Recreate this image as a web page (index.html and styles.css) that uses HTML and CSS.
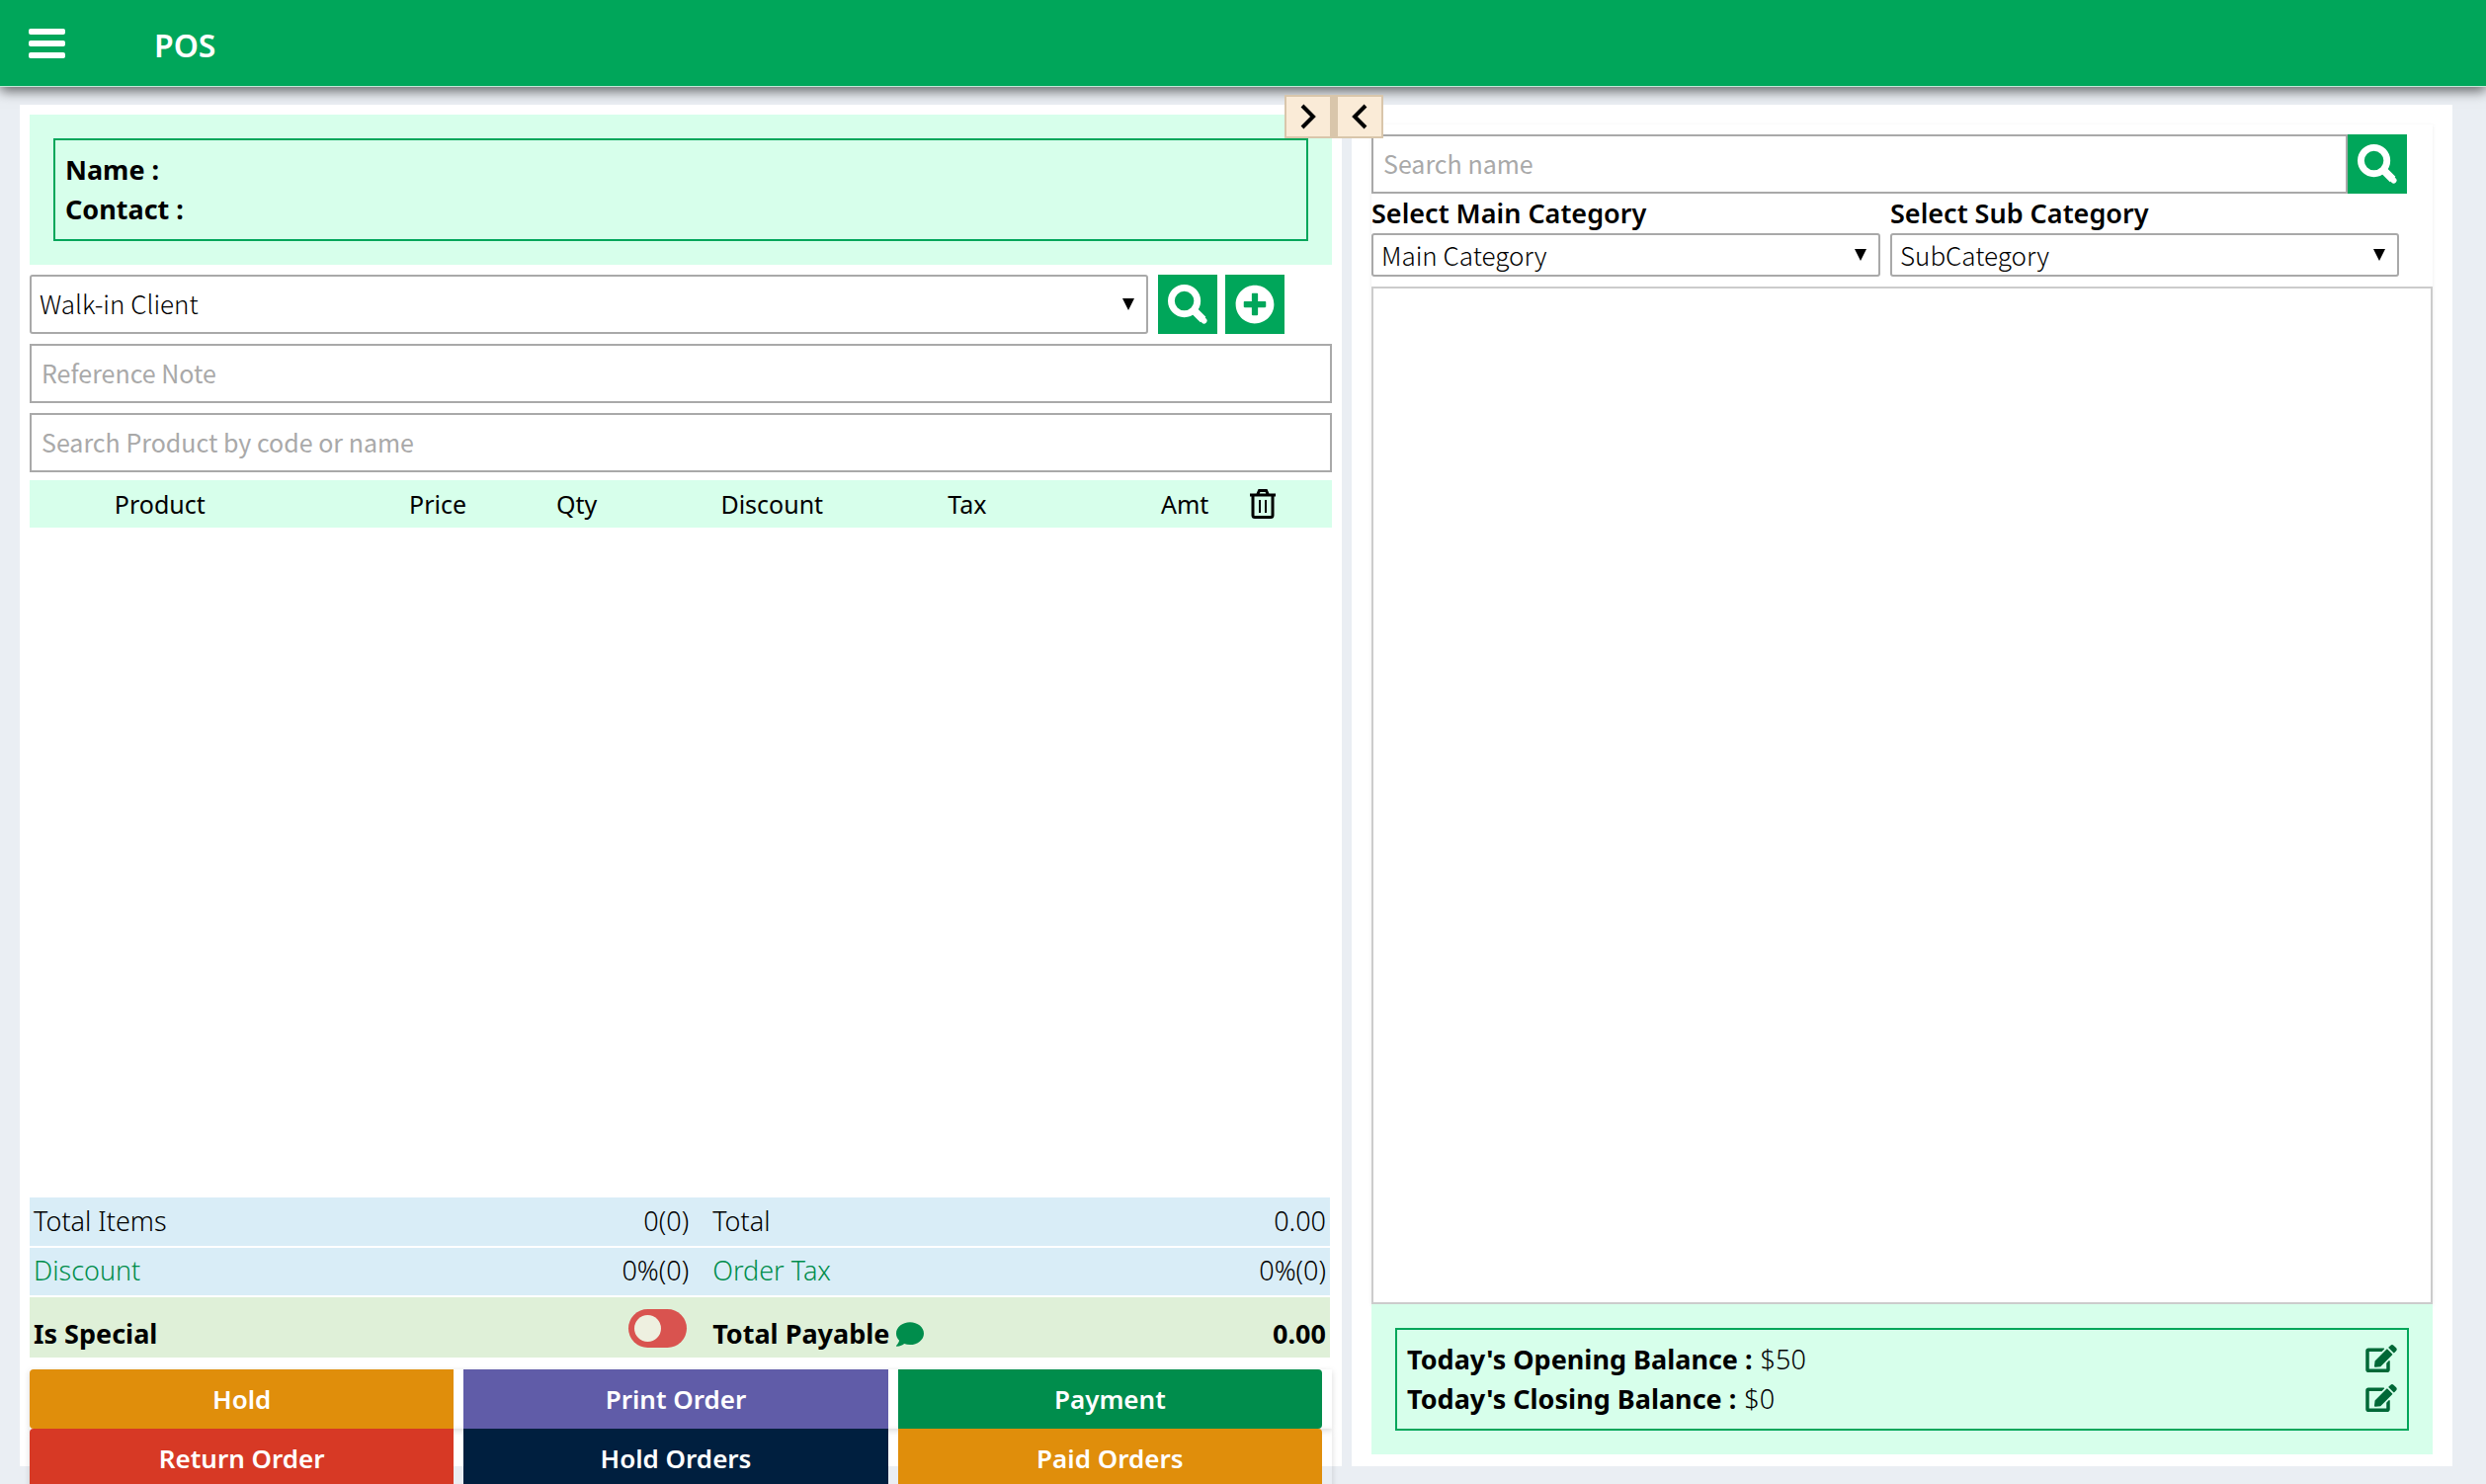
FILE: index.html
```html
<!DOCTYPE html>
<html lang="en">
<head>
<meta charset="utf-8">
<meta name="viewport" content="width=device-width, initial-scale=1">
<title>POS</title>
<link rel="stylesheet" href="styles.css">
</head>
<body>
<header class="topbar">
  <button class="menu-button" type="button" aria-label="Menu"><span></span><span></span><span></span></button>
  <h1 class="title">POS</h1>
</header>

<main class="workspace">
  <div class="splitter">
    <button type="button" aria-label="Expand left"><svg viewBox="0 0 16 28"><path d="M2 3 13 14 2 25"/></svg></button>
    <button type="button" aria-label="Expand right"><svg viewBox="0 0 16 28"><path d="M14 3 3 14 14 25"/></svg></button>
  </div>

  <section class="panel order">
    <div class="notice">
      <div class="notice-box">
        <p><b>Name :</b></p>
        <p><b>Contact :</b></p>
      </div>
    </div>

    <div class="client-row">
      <div class="select client-select">
        <select aria-label="Client"><option>Walk-in Client</option></select>
      </div>
      <button class="icon-button" type="button" aria-label="Search client">
        <svg viewBox="0 0 41 41"><use href="#search-icon"/></svg>
      </button>
      <button class="icon-button" type="button" aria-label="Add client">
        <svg viewBox="0 0 512 512"><path d="M256 8C119 8 8 119 8 256s111 248 248 248 248-111 248-248S393 8 256 8zm144 276c0 6.600-5.400 12-12 12h-92v92c0 6.600-5.400 12-12 12h-56c-6.600 0-12-5.400-12-12v-92h-92c-6.600 0-12-5.400-12-12v-56c0-6.600 5.400-12 12-12h92v-92c0-6.600 5.400-12 12-12h56c6.600 0 12 5.400 12 12v92h92c6.600 0 12 5.400 12 12v56z"/></svg>
      </button>
    </div>

    <input class="field" type="text" placeholder="Reference Note" aria-label="Reference Note">
    <input class="field" type="text" placeholder="Search Product by code or name" aria-label="Search Product by code or name">

    <div class="items">
      <table class="items-table">
        <colgroup><col class="c-product"><col class="c-price"><col class="c-qty"><col class="c-discount"><col class="c-tax"><col class="c-amt"><col></colgroup>
        <thead>
          <tr>
            <th>Product</th><th class="right">Price</th><th>Qty</th><th>Discount</th><th>Tax</th><th class="right">Amt</th>
            <th class="left"><svg class="trash" viewBox="0 0 26 30" role="img" aria-label="Remove"><path d="M0 6h26M3 6v20.500q0 2 2 2h16q2 0 2-2V6M7.500 6 9.500 1.500h7L18.500 6"/><path class="thin" d="M10 11v13M16 11v13"/></svg></th>
          </tr>
        </thead>
      </table>
    </div>

    <table class="totals">
      <colgroup><col class="t-1"><col class="t-2"><col class="t-3"><col></colgroup>
      <tr><td>Total Items</td><td class="num">0(0)</td><td>Total</td><td class="num">0.00</td></tr>
      <tr><td><a href="#">Discount</a></td><td class="num">0%(0)</td><td><a href="#">Order Tax</a></td><td class="num">0%(0)</td></tr>
      <tr class="payable">
        <td><label for="special">Is Special</label></td>
        <td class="num"><input class="switch" id="special" type="checkbox"></td>
        <td>Total Payable <a href="#" aria-label="Comment"><svg class="comment" viewBox="0 0 512 448"><path d="M256 0C114.600 0 0 93.100 0 208c0 49.600 21.400 95 57 130.700C44.500 389.100 2.700 434 2.200 434.500c-2.200 2.300-2.800 5.700-1.500 8.700S4.800 448 8 448c66.300 0 116-31.800 140.600-51.400 32.700 12.300 69 19.400 107.400 19.400 141.400 0 256-93.100 256-208S397.400 0 256 0z"/></svg></a></td>
        <td class="num">0.00</td>
      </tr>
    </table>

    <div class="actions">
      <div class="action-row">
        <button class="amber first" type="button">Hold</button>
        <button class="purple" type="button">Print Order</button>
        <button class="green last" type="button">Payment</button>
      </div>
      <div class="action-row">
        <button class="red first" type="button">Return Order</button>
        <button class="navy" type="button">Hold Orders</button>
        <button class="amber last" type="button">Paid Orders</button>
      </div>
    </div>
  </section>

  <section class="panel catalog">
    <div class="catalog-card">
      <div class="search-row">
        <input class="field" type="text" placeholder="Search name" aria-label="Search name">
        <button class="icon-button" type="button" aria-label="Search">
          <svg viewBox="0 0 41 41"><use href="#search-icon"/></svg>
        </button>
      </div>
      <div class="category-row">
        <div class="category">
          <label for="main-category">Select Main Category</label>
          <div class="select small"><select id="main-category"><option>Main Category</option></select></div>
        </div>
        <div class="category">
          <label for="sub-category">Select Sub Category</label>
          <div class="select small"><select id="sub-category"><option>SubCategory</option></select></div>
        </div>
      </div>
      <div class="products"></div>
    </div>
    <div class="notice">
      <div class="notice-box">
        <p><b>Today's Opening Balance :</b> <span>$50</span>
          <a class="edit" href="#" aria-label="Edit opening balance"><svg viewBox="0 0 576 512"><use href="#edit-icon"/></svg></a></p>
        <p><b>Today's Closing Balance :</b> <span>$0</span>
          <a class="edit" href="#" aria-label="Edit closing balance"><svg viewBox="0 0 576 512"><use href="#edit-icon"/></svg></a></p>
      </div>
    </div>
  </section>
</main>

<svg class="defs" aria-hidden="true"><defs>
  <g id="search-icon" fill="none" stroke="currentColor"><circle cx="17" cy="17" r="13.500" stroke-width="7"/><path d="M27 27 36.500 36.500" stroke-width="8" stroke-linecap="butt"/><path d="M35 35 37.500 37.500" stroke-width="6" stroke-linecap="round"/></g>
  <path id="edit-icon" d="M402.600 83.200l90.200 90.200c3.800 3.800 3.800 10 0 13.800L274.400 405.600l-92.800 10.300c-12.400 1.400-22.900-9.100-21.500-21.500l10.300-92.800L388.800 83.200c3.800-3.800 10-3.800 13.800 0zm162-22.900l-48.800-48.800c-15.200-15.200-39.900-15.200-55.200 0l-35.400 35.400c-3.800 3.800-3.800 10 0 13.800l90.200 90.200c3.800 3.800 10 3.800 13.800 0l35.400-35.400c15.200-15.300 15.200-40 0-55.200zM384 346.200V448H64V128h229.800c3.200 0 6.200-1.300 8.500-3.500l40-40c7.600-7.600 2.200-20.500-8.500-20.500H48C21.500 64 0 85.500 0 112v352c0 26.500 21.500 48 48 48h352c26.500 0 48-21.500 48-48V306.200c0-10.700-12.900-16-20.500-8.500l-40 40c-2.200 2.300-3.500 5.300-3.500 8.500z"/>
</defs></svg>
</body>
</html>
```
FILE: styles.css
```css
* { box-sizing: border-box; }

body {
  margin: 0;
  height: 100vh;
  overflow: hidden;
  display: flex;
  flex-direction: column;
  background: #eaeef3;
  color: #000;
  font: 27px/40px "Noto Sans", sans-serif;
}

p { margin: 0; }
a { color: #008d4c; text-decoration: none; }
button { margin: 0; padding: 0; border: 0; font: inherit; cursor: pointer; }
svg { fill: currentColor; }
.defs { display: none; }

/* Header */
.topbar {
  flex: none;
  display: flex;
  align-items: center;
  gap: 90px;
  height: 88px;
  padding: 0 29px;
  background: #00a65a;
  border-bottom: 1px solid #c4e8d8;
  box-shadow: 0 4px 12px rgba(0, 0, 0, .6);
  color: #fff;
}
.menu-button { display: grid; gap: 6px; width: 37px; background: none; }
.menu-button span { height: 6px; border-radius: 2px; background: #fff; }
.title { margin: 0; padding-top: 4px; font-size: 32px; line-height: 44px; font-weight: 600; }

/* Two-column work area */
.workspace {
  position: relative;
  flex: 1;
  min-height: 0;
  display: grid;
  grid-template-columns: 1338fr 1114fr;
  gap: 10px;
  padding: 18px 34px 18px 20px;
}
.panel { display: flex; flex-direction: column; min-height: 0; background: #fff; }
.order { padding: 10px; }
.catalog { padding: 20px 20px 12px; }

.splitter { position: absolute; top: 8px; left: 1300px; display: flex; }
.splitter button {
  display: grid;
  place-items: center;
  width: 50px;
  height: 44px;
  border: 2px solid #d9c6ab;
  background: #faebd7;
}
.splitter button:first-child { border-right-width: 4px; }
.splitter button:last-child { border-left-width: 4px; }
.splitter svg { width: 16px; height: 28px; fill: none; stroke: #000; stroke-width: 4; }

.notice { flex: none; padding: 24px; background: #d7ffeb; }
.notice-box { height: 104px; padding: 10px; border: 2px solid #00a65a; }
.notice-box p { display: flex; gap: 8px; }
.notice-box span { font-weight: 300; }
.edit { margin-left: auto; color: #006837; }
.edit svg { display: block; width: 32px; height: 28px; margin-top: 5px; }

/* Form controls */
.field, .select select {
  width: 100%;
  height: 60px;
  border: 2px solid #a9a9a9;
  background: #fff;
  color: #000;
  font: 25px/40px "Noto Sans CJK SC", sans-serif;
}
.field { flex: none; padding: 0 10px 2px; }
.field::placeholder { color: #a9a9a9; opacity: 1; }
.select { display: grid; align-items: center; }
.select select { grid-area: 1 / 1; appearance: none; padding: 0 8px 2px; border-radius: 3px; font-size: 26px; font-weight: 300; }
.select::after {
  content: "";
  grid-area: 1 / 1;
  justify-self: end;
  width: 12px;
  height: 12px;
  margin-right: 14px;
  background: #000;
  clip-path: polygon(0 0, 100% 0, 50% 100%);
  pointer-events: none;
}
.select.small select { height: 44px; }
.icon-button { flex: none; display: grid; place-items: center; width: 60px; height: 60px; background: #00a65a; color: #fff; }
.icon-button svg { width: 40px; height: 40px; }

.client-row { display: flex; gap: 8px; margin: 10px 48px 10px 0; }
.client-select { flex: 1; margin-right: 2px; }
.order > .field { margin-bottom: 10px; }

/* Item list */
.items { flex: 1; min-height: 0; margin-top: -2px; }
.items-table { width: 100%; border-collapse: collapse; table-layout: fixed; background: #d7ffeb; }
.items-table th { height: 48px; padding: 0; font-size: 25px; line-height: 40px; font-weight: 400; text-align: center; }
.items-table .right { padding-right: 6px; text-align: right; }
.items-table .left { padding-left: 36px; text-align: left; }
.c-product { width: 20%; }
.c-price { width: 14%; }
.c-qty { width: 16%; }
.c-discount { width: 14%; }
.c-tax { width: 16%; }
.c-amt { width: 11%; }
.trash { display: block; width: 26px; height: 30px; fill: none; stroke: #000; stroke-width: 3; }
.trash .thin { stroke-width: 2; }

/* Totals */
.totals { width: calc(100% - 2px); border-collapse: collapse; table-layout: fixed; }
.t-1 { width: 25%; }
.t-2 { width: 26%; }
.t-3 { width: 24%; }
.totals tr { border-bottom: 2px solid #fff; background: #d9edf7; }
.totals td { height: 50px; padding: 0 4px 2px; font-weight: 300; }
.totals td:nth-child(3) { padding-left: 20px; }
.totals .num { text-align: right; }
.totals .payable { border-bottom: 0; background: #dff0d8; }
.totals .payable td { height: 62px; padding-top: 12px; padding-bottom: 0; font-weight: 700; }
.comment { width: 28px; height: 25px; vertical-align: -3px; }
.switch { appearance: none; display: block; width: 59px; height: 39px; margin: -10px 2px 0 auto; padding: 6px; border-radius: 20px; background: #d9534f; }
.switch::before { content: ""; display: block; width: 27px; height: 27px; border-radius: 50%; background: #eef0e0; }

/* Action buttons */
.actions { flex: none; margin: 12px 0 -32px; }
.action-row { display: grid; grid-template-columns: repeat(3, 1fr); gap: 10px; height: 60px; padding-right: 10px; box-shadow: 0 2px 6px rgba(0, 0, 0, .15); }
.action-row button { color: #fff; font-size: 26px; font-weight: 600; }
.action-row .first { border-radius: 4px 0 0 4px; }
.action-row .last { border-radius: 0 4px 4px 0; }
.amber { background: #e08e0b; }
.purple { background: #605ca8; }
.green { background: #008d4c; }
.red { background: #d73925; }
.navy { background: #001f3f; }

/* Catalogue */
.catalog-card { flex: 1; min-height: 0; display: flex; flex-direction: column; padding-top: 10px; box-shadow: 0 1px 4px rgba(0, 0, 0, .08); }
.search-row { display: flex; margin-right: 26px; }
.search-row .field { flex: 1; }
.category-row { display: grid; grid-template-columns: 1fr 1fr; gap: 10px; margin-right: 34px; }
.category label { display: block; font-weight: 600; }
.products { flex: 1; margin-top: 10px; border: 2px solid #ccc; }
```
